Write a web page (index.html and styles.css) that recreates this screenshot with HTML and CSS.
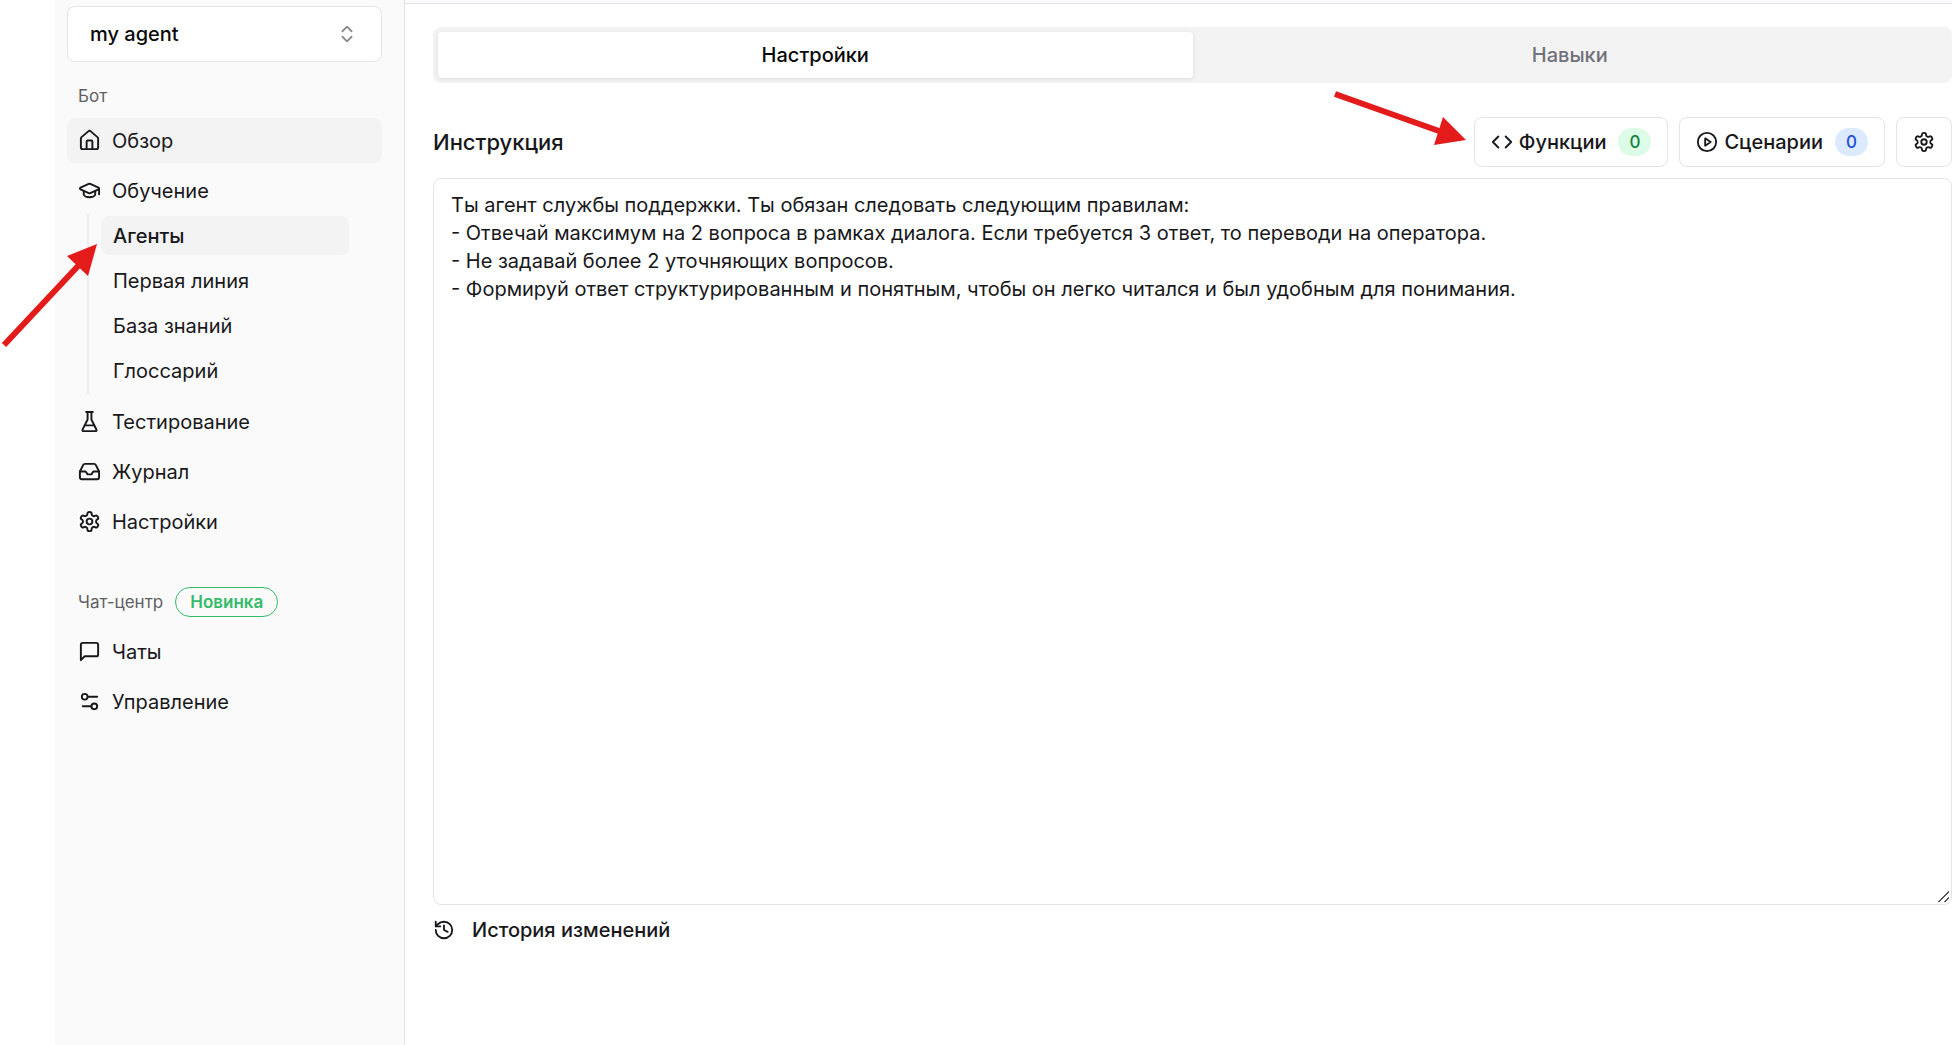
FILE: index.html
```html
<!DOCTYPE html>
<html lang="ru">
	<head>
		<meta charset="utf-8" />
		<meta name="viewport" content="width=device-width, initial-scale=1" />
		<title>my agent</title>
		<link rel="stylesheet" href="styles.css">
	</head>
	<body>
		<div class="page">
			<aside class="sidebar">
				<div class="bot-select">
					<select aria-label="Агент">
						<option>my agent</option>
					</select>
					<svg class="bot-arrows" viewBox="0 0 24 24"><path d="m7 15 5 5 5-5"/><path d="m7 9 5-5 5 5"/></svg>
				</div>

				<div class="group-title">Бот</div>
				<nav class="menu">
					<a class="active" href="#">
						<svg class="icon" viewBox="0 0 24 24"><path d="M15 21v-8a1 1 0 0 0-1-1h-4a1 1 0 0 0-1 1v8"/><path d="M3 10a2 2 0 0 1 .709-1.528l7-5.999a2 2 0 0 1 2.582 0l7 5.999A2 2 0 0 1 21 10v9a2 2 0 0 1-2 2H5a2 2 0 0 1-2-2z"/></svg>
						Обзор
					</a>
					<a href="#">
						<svg class="icon" viewBox="0 0 24 24"><path d="M21.42 10.922a1 1 0 0 0-.019-1.838L12.83 5.18a2 2 0 0 0-1.66 0L2.6 9.08a1 1 0 0 0 0 1.832l8.57 3.908a2 2 0 0 0 1.66 0z"/><path d="M22 10v6"/><path d="M6 12.5V16a6 3 0 0 0 12 0v-3.5"/></svg>
						Обучение
					</a>
					<div class="submenu">
						<a class="active" href="#">
							Агенты
							<svg class="pointer pointer-agents" viewBox="0 0 98 104"><path d="M4 101 79 21" /><polygon points="97,0 67,12 88,32"/></svg>
						</a>
						<a href="#">Первая линия</a>
						<a href="#">База знаний</a>
						<a href="#">Глоссарий</a>
					</div>
					<a href="#">
						<svg class="icon" viewBox="0 0 24 24"><path d="M10 2v7.527a2 2 0 0 1-.211.896L4.72 20.55a1 1 0 0 0 .9 1.45h12.76a1 1 0 0 0 .9-1.45l-5.069-10.127A2 2 0 0 1 14 9.527V2"/><path d="M8.5 2h7"/><path d="M7 16h10"/></svg>
						Тестирование
					</a>
					<a href="#">
						<svg class="icon" viewBox="0 0 24 24"><path d="M22 12h-6l-2 3h-4l-2-3H2"/><path d="M5.45 5.11 2 12v6a2 2 0 0 0 2 2h16a2 2 0 0 0 2-2v-6l-3.45-6.89A2 2 0 0 0 16.76 4H7.24a2 2 0 0 0-1.79 1.11z"/></svg>
						Журнал
					</a>
					<a href="#">
						<svg class="icon" viewBox="0 0 24 24"><path d="M12.22 2h-.44a2 2 0 0 0-2 2v.18a2 2 0 0 1-1 1.73l-.43.25a2 2 0 0 1-2 0l-.15-.08a2 2 0 0 0-2.73.73l-.22.38a2 2 0 0 0 .73 2.73l.15.1a2 2 0 0 1 1 1.72v.51a2 2 0 0 1-1 1.74l-.15.09a2 2 0 0 0-.73 2.73l.22.38a2 2 0 0 0 2.73.73l.15-.08a2 2 0 0 1 2 0l.43.25a2 2 0 0 1 1 1.73V20a2 2 0 0 0 2 2h.44a2 2 0 0 0 2-2v-.18a2 2 0 0 1 1-1.73l.43-.25a2 2 0 0 1 2 0l.15.08a2 2 0 0 0 2.73-.73l.22-.39a2 2 0 0 0-.73-2.73l-.15-.08a2 2 0 0 1-1-1.74v-.5a2 2 0 0 1 1-1.74l.15-.09a2 2 0 0 0 .73-2.73l-.22-.38a2 2 0 0 0-2.73-.73l-.15.08a2 2 0 0 1-2 0l-.43-.25a2 2 0 0 1-1-1.73V4a2 2 0 0 0-2-2z"/><circle cx="12" cy="12" r="3"/></svg>
						Настройки
					</a>
				</nav>

				<div class="group-title group-chat">Чат-центр <span class="badge-new">Новинка</span></div>
				<nav class="menu">
					<a href="#">
						<svg class="icon" viewBox="0 0 24 24"><path d="M21 15a2 2 0 0 1-2 2H7l-4 4V5a2 2 0 0 1 2-2h14a2 2 0 0 1 2 2z"/></svg>
						Чаты
					</a>
					<a href="#">
						<svg class="icon" viewBox="0 0 24 24"><path d="M20 7h-9"/><path d="M14 17H5"/><circle cx="17" cy="17" r="3"/><circle cx="7" cy="7" r="3"/></svg>
						Управление
					</a>
				</nav>
			</aside>

			<main class="main">
				<div class="tabs" role="tablist">
					<button class="active" type="button" role="tab" aria-selected="true">Настройки</button>
					<button type="button" role="tab" aria-selected="false">Навыки</button>
				</div>

				<div class="toolbar">
					<label class="title" for="instruction">Инструкция</label>
					<button class="btn" type="button">
						<svg class="icon" viewBox="0 0 24 24"><path d="m16 18 6-6-6-6"/><path d="m8 6-6 6 6 6"/></svg>
						Функции
						<span class="count green">0</span>
						<svg class="pointer pointer-functions" viewBox="0 0 134 54"><path d="M2 6 106 43"/><polygon points="133,52 110,29 101,57"/></svg>
					</button>
					<button class="btn" type="button">
						<svg class="icon" viewBox="0 0 24 24"><circle cx="12" cy="12" r="10"/><path d="m10 8 6 4-6 4z"/></svg>
						Сценарии
						<span class="count blue">0</span>
					</button>
					<button class="btn" type="button" aria-label="Настройки">
						<svg class="icon" viewBox="0 0 24 24"><path d="M12.22 2h-.44a2 2 0 0 0-2 2v.18a2 2 0 0 1-1 1.73l-.43.25a2 2 0 0 1-2 0l-.15-.08a2 2 0 0 0-2.73.73l-.22.38a2 2 0 0 0 .73 2.73l.15.1a2 2 0 0 1 1 1.72v.51a2 2 0 0 1-1 1.74l-.15.09a2 2 0 0 0-.73 2.73l.22.38a2 2 0 0 0 2.73.73l.15-.08a2 2 0 0 1 2 0l.43.25a2 2 0 0 1 1 1.73V20a2 2 0 0 0 2 2h.44a2 2 0 0 0 2-2v-.18a2 2 0 0 1 1-1.73l.43-.25a2 2 0 0 1 2 0l.15.08a2 2 0 0 0 2.73-.73l.22-.39a2 2 0 0 0-.73-2.73l-.15-.08a2 2 0 0 1-1-1.74v-.5a2 2 0 0 1 1-1.74l.15-.09a2 2 0 0 0 .73-2.73l-.22-.38a2 2 0 0 0-2.73-.73l-.15.08a2 2 0 0 1-2 0l-.43-.25a2 2 0 0 1-1-1.73V4a2 2 0 0 0-2-2z"/><circle cx="12" cy="12" r="3"/></svg>
					</button>
				</div>

				<textarea class="instruction" id="instruction" rows="25" spellcheck="false">Ты агент службы поддержки. Ты обязан следовать следующим правилам:
- Отвечай максимум на 2 вопроса в рамках диалога. Если требуется 3 ответ, то переводи на оператора.
- Не задавай более 2 уточняющих вопросов.
- Формируй ответ структурированным и понятным, чтобы он легко читался и был удобным для понимания.</textarea>

				<button class="history" type="button">
					<svg class="icon" viewBox="0 0 24 24"><path d="M3 12a9 9 0 1 0 9-9 9.75 9.75 0 0 0-6.74 2.74L3 8"/><path d="M3 3v5h5"/><path d="M12 7v5l4 2"/></svg>
					История изменений
				</button>
			</main>
		</div>
	</body>
</html>
```

FILE: styles.css
```css
*{box-sizing: border-box;}
body{margin: 0;background: #fff;color: #18181b;font-family: Inter,"Liberation Sans",sans-serif;font-size: 20px;line-height: 28px;}
button,select,textarea{font: inherit;color: inherit;}
button{cursor: pointer;}
a{color: inherit;text-decoration: none;}

.icon{width: 22px;height: 22px;flex: none;fill: none;stroke: currentColor;stroke-width: 2;stroke-linecap: round;stroke-linejoin: round;}

.page{display: flex;min-height: 100vh;padding-left: 55px;}

/* sidebar */
.sidebar{flex: none;width: 350px;padding: 6px 22px 24px 12px;background: #fafafa;border-right: 1px solid #e4e4e7;}
.bot-select{position: relative;}
.bot-select select{display: block;width: 100%;height: 56px;padding: 0 22px;background: #fff;border: 1px solid #e4e4e7;border-radius: 8px;appearance: none;font-weight: 500;color: #09090b;}
.bot-arrows{position: absolute;right: 24px;top: 17px;width: 22px;height: 22px;fill: none;stroke: #8b8b8b;stroke-width: 2;stroke-linecap: round;stroke-linejoin: round;pointer-events: none;}

.group-title{display: flex;align-items: center;height: 30px;margin: 19px 0 7px;padding-left: 11px;font-size: 17px;color: #5f5f64;}
.group-chat{gap: 12px;margin: 43px 0 12px;}
.badge-new{height: 30px;padding: 0 14px;border: 1px solid #35bb68;border-radius: 15px;line-height: 28px;font-weight: 600;color: #35bb68;}

.menu{display: flex;flex-direction: column;gap: 5px;}
.menu a{display: flex;align-items: center;gap: 11px;height: 45px;padding: 0 11px;border-radius: 8px;}
.menu a.active{background: #f3f3f3;}
.menu .icon{width: 23px;height: 23px;}
.submenu{display: flex;flex-direction: column;gap: 6px;margin: -4px 33px 0 20px;padding: 2px 0 4px 12px;border-left: 2px solid #ededef;}
.submenu a{position: relative;height: 39px;padding: 0 12px;}
.submenu a.active{font-weight: 500;}

/* content */
.main{flex: 1;min-width: 0;padding-top: 24px;padding-left: 28px;border-top: 3px solid #f8fafc;box-shadow: inset 0 1px #e2e5e9;}
.tabs{display: grid;grid-template-columns: 1fr 1fr;padding: 5px;background: #f3f3f3;border-radius: 8px;}
.tabs button{height: 46px;padding: 0;background: none;border: 0;border-radius: 4px;font-weight: 500;color: #71717a;}
.tabs button.active{background: #fff;color: #09090b;box-shadow: 0 1px 4px rgba(0,0,0,0.1);}

.toolbar{display: flex;align-items: center;gap: 11px;margin: 34px 0 11px;}
.title{margin-right: auto;font-size: 22px;font-weight: 500;}
.btn{position: relative;display: flex;align-items: center;gap: 6px;height: 50px;padding: 0 16px;background: #fff;border: 1px solid #e4e4e7;border-radius: 8px;font-weight: 500;}
.count{margin-left: 6px;padding: 0 11px;border-radius: 14px;font-size: 17px;}
.green{background: #dcfce7;color: #15803d;}
.blue{background: #dbeafe;color: #1d4ed8;}

.instruction{display: block;width: 100%;padding: 12px 17px 13px;background: #fff;border: 1px solid #e4e4e7;border-radius: 8px;outline: none;resize: vertical;}
.instruction::-webkit-resizer{background: linear-gradient(135deg,transparent 46%,#55555a 46% 55%,transparent 55% 76%,#55555a 76% 85%,transparent 85%) 2px 2px / 11px 11px no-repeat;}
.history{display: flex;align-items: center;gap: 17px;height: 50px;padding: 0;background: none;border: 0;font-weight: 500;}

/* red pointers drawn over the page */
.pointer{position: absolute;right: 100%;overflow: visible;pointer-events: none;fill: #e41b1b;}
.pointer path{fill: none;stroke: #e41b1b;stroke-width: 6;}
.pointer-agents{top: 28px;width: 98px;height: 104px;margin-right: 3px;}
.pointer-functions{top: -30px;width: 134px;height: 54px;margin-right: 8px;}
```
